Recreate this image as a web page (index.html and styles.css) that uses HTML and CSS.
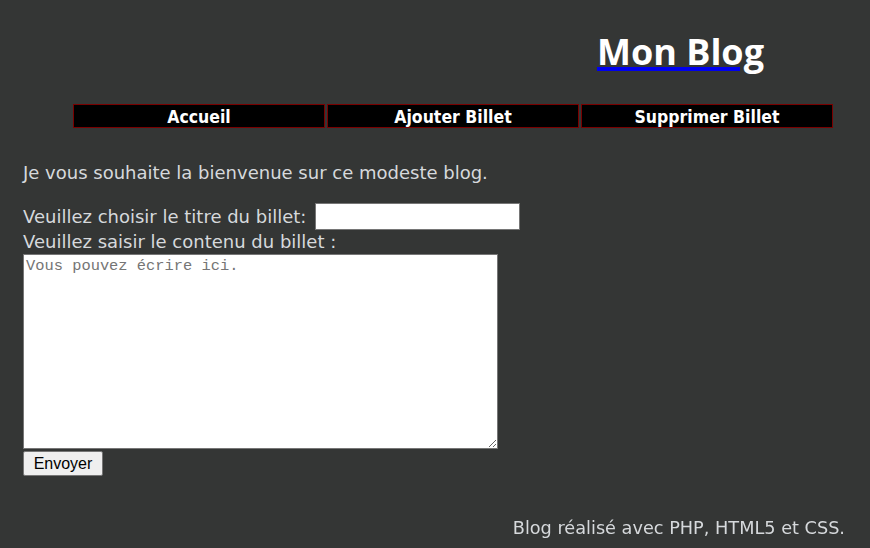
FILE: index.html
```html
<!DOCTYPE html>
<html lang="fr">
<head>
<meta charset="utf-8">
<title>Mon Blog</title>
<link rel="stylesheet" href="styles.css">
</head>
<body>
<header class="site-header">
  <h1 class="site-title"><a href="#">Mon Blog</a></h1>
</header>
<nav class="menu">
  <a class="menu-item" href="#">Accueil</a>
  <a class="menu-item" href="#">Ajouter Billet</a>
  <a class="menu-item" href="#">Supprimer Billet</a>
</nav>
<main class="content">
  <p class="welcome">Je vous souhaite la bienvenue sur ce modeste blog.</p>
  <form class="post-form">
    <div class="row">
      <label for="titre">Veuillez choisir le titre du billet:</label>
      <input id="titre" class="title-input" type="text">
    </div>
    <label for="contenu" class="block-label">Veuillez saisir le contenu du billet :</label>
    <textarea id="contenu" class="body-input" placeholder="Vous pouvez écrire ici."></textarea>
    <button type="button" class="send">Envoyer</button>
  </form>
</main>
<footer class="site-footer">Blog réalisé avec PHP, HTML5 et CSS.</footer>
</body>
</html>
```

FILE: styles.css
```css
html, body {
  margin: 0;
  padding: 0;
  background: #343635;
  height: 100%;
}
body {
  font-family: "DejaVu Sans", sans-serif;
  color: #d6d9dc;
  font-size: 18px;
}
.site-header {
  display: flex;
  justify-content: flex-end;
  padding: 30px 106px 0 0;
  height: 74px;
  box-sizing: border-box;
}
.site-title {
  margin: 0;
  font-family: "Open Sans", sans-serif;
  font-size: 36px;
  font-weight: bold;
  line-height: 44px;
}
.site-title a {
  color: #ffffff;
  text-decoration: underline;
  text-decoration-color: #0000ee;
  text-decoration-thickness: 4px;
  text-underline-offset: 2px;
}
.menu {
  display: flex;
  gap: 2px;
  width: 760px;
  margin: 30px 0 0 73px;
}
.menu-item {
  flex: 1;
  background: #000;
  border: 1px solid #7a0000;
  color: #fff;
  font-family: "DejaVu Sans Condensed", "DejaVu Sans", sans-serif;
  font-weight: bold;
  text-align: center;
  text-decoration: none;
  height: 22px;
  line-height: 24px;
  font-size: 17.5px;
}
.content {
  padding: 0 0 0 23px;
}
.welcome {
  margin: 33px 0 0;
  line-height: 24px;
}
.post-form {
  margin-top: 18px;
  display: flex;
  flex-direction: column;
  align-items: flex-start;
}
.row {
  display: flex;
  align-items: center;
  gap: 9px;
  height: 27px;
}
.title-input {
  box-sizing: border-box;
  border: 1px solid #767676;
  margin: 0;
  padding: 0 2px;
  width: 205px;
  height: 27px;
}
.block-label {
  line-height: 24px;
}
.body-input {
  width: 475px;
  height: 195px;
  box-sizing: border-box;
  margin: 0;
  border: 1px solid #767676;
  font-family: "Liberation Mono", monospace;
  font-size: 15.4px;
  padding: 2px;
}
.body-input::placeholder {
  color: #757575;
}
.send {
  margin-top: 2px;
  font-family: "Liberation Sans", Arial, sans-serif;
  font-size: 16px;
  width: 80px;
  height: 25px;
  padding: 0;
  background: #efefef;
  border: 1px solid #767676;
  border-radius: 2px;
  color: #000;
}
.site-footer {
  position: fixed;
  bottom: 10px;
  right: 25px;
  font-size: 17.7px;
}
```
